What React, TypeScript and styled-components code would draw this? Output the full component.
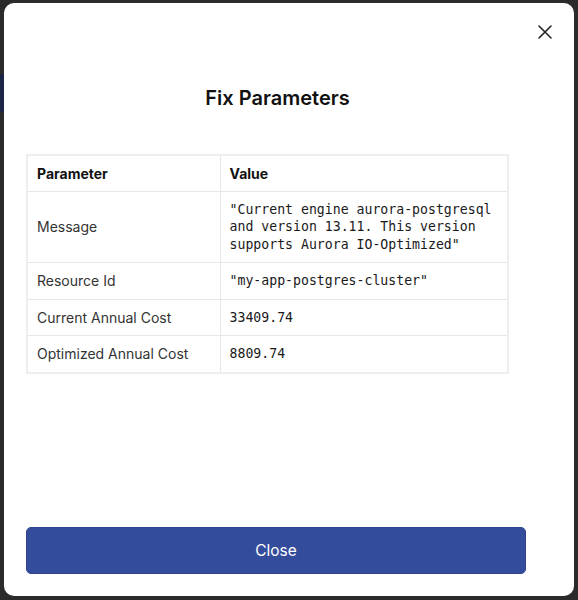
import * as React from 'react';
import styled, { createGlobalStyle } from 'styled-components';

const rows = [
    { name: 'Message', value: '"Current engine aurora-postgresql and version 13.11. This version supports Aurora IO-Optimized"' },
    { name: 'Resource Id', value: '"my-app-postgres-cluster"' },
    { name: 'Current Annual Cost', value: '33409.74' },
    { name: 'Optimized Annual Cost', value: '8809.74' },
];

export default function App() {
    return <Page>
        <GlobalStyle />
        <Backdrop />
        <Modal>
            <CloseIcon aria-label="close">
                <svg width="16" height="16" viewBox="0 0 16 16">
                    <path d="M2 2 L14 14 M14 2 L2 14" stroke="#222" strokeWidth="1.6" strokeLinecap="round" />
                </svg>
            </CloseIcon>
            <Title>Fix Parameters</Title>
            <Table>
                <thead>
                    <tr>
                        <Th>Parameter</Th>
                        <Th>Value</Th>
                    </tr>
                </thead>
                <tbody>
                    {rows.map(r => (
                        <tr key={r.name}>
                            <Td>{r.name}</Td>
                            <ValueTd>{r.value}</ValueTd>
                        </tr>
                    ))}
                </tbody>
            </Table>
            <Spacer />
            <CloseButton>Close</CloseButton>
        </Modal>
    </Page>;
}

//Styles
const GlobalStyle = createGlobalStyle`
  html, body {
    margin: 0;
    padding: 0;
    background: #2b2b2b;
  }
`;

const Page = styled.div`
  position: relative;
  width: 578px;
  height: 600px;
  padding: 3px 4px;
  box-sizing: border-box;
  background: #2b2b2b;
  overflow: hidden;
`;

// dark blue bit of the page behind the overlay
const Backdrop = styled.div`
  position: absolute;
  left: 0;
  top: 74px;
  width: 4px;
  height: 38px;
  background: #1c2545;
`;

const Modal = styled.div`
  position: relative;
  height: 593px;
  background: #fff;
  border-radius: 10px;
  padding: 0 48px 22px 22px;
  box-sizing: border-box;
  display: flex;
  flex-direction: column;
`;

const CloseIcon = styled.button`
  position: absolute;
  top: 21px;
  right: 21px;
  border: none;
  background: none;
  padding: 0;
  width: 16px;
  height: 16px;
  display: flex;
`;

const Title = styled.h2`
  margin: 83px 0 0 3px;
  text-align: center;
  font-family: Inter, "Noto Sans", sans-serif;
  font-weight: 600;
  font-size: 20px;
  line-height: 24px;
  color: #111;
`;

const Table = styled.table`
  margin-top: 44px;
  width: 483px;
  border-collapse: collapse;
  border: 2px solid #eceef2;
  font-family: Inter, "Noto Sans", sans-serif;
  font-size: 14px;
  color: #333;
`;

const Th = styled.th`
  box-sizing: border-box;
  text-align: left;
  font-weight: 700;
  font-size: 14px;
  height: 36px;
  padding: 0 9px;
  border: 1.5px solid #e6e8ec;
  color: #111;
  &:first-child { width: 193px; }
`;

const Td = styled.td`
  box-sizing: border-box;
  height: 36px;
  padding: 0 9px;
  border: 1.5px solid #e6e8ec;
  vertical-align: middle;
`;

const ValueTd = styled(Td)`
  font-family: "DejaVu Sans Mono", "Liberation Mono", monospace;
  font-size: 13.2px;
  line-height: 17.5px;
  padding: 9px 9px;
  color: #1a1a1a;
`;

const Spacer = styled.div`
  flex: 1;
`;

const CloseButton = styled.button`
  width: 500px;
  height: 47px;
  background: #344c9c;
  color: #fff;
  border: 1px solid #2f4590;
  border-radius: 5px;
  font-family: Inter, "Noto Sans", sans-serif;
  font-size: 15.5px;
  font-weight: 400;
  cursor: pointer;
`;
